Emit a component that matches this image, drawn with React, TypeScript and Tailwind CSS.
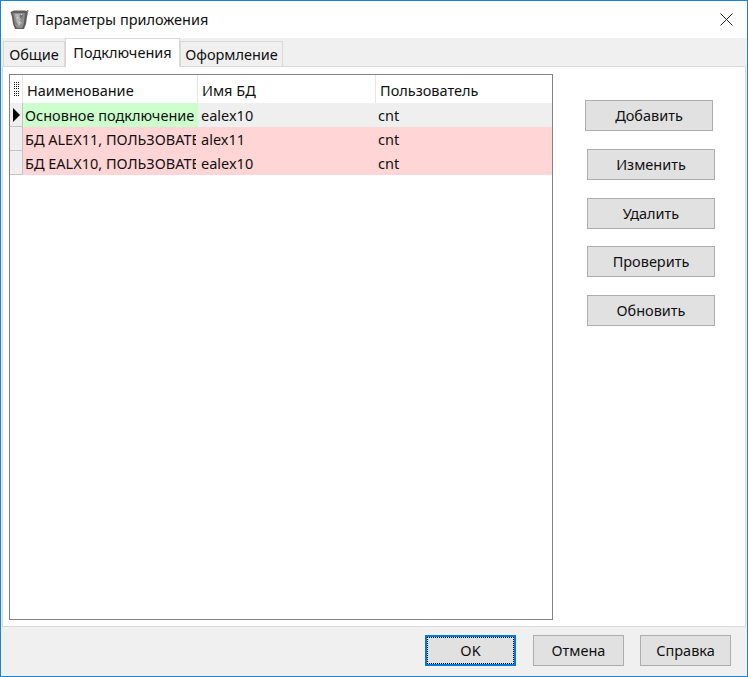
const font = "font-['Noto_Sans','Open_Sans',sans-serif]";

const rows = [
  { name: "Основное подключение", db: "ealex10", user: "cnt", nameBg: "bg-[#ccffcc]", rowBg: "bg-[#efefef]", current: true },
  { name: "БД ALEX11, ПОЛЬЗОВАТЕ", db: "alex11", user: "cnt", nameBg: "bg-[#ffd5d5]", rowBg: "bg-[#ffd5d5]", current: false },
  { name: "БД EALX10, ПОЛЬЗОВАТЕ", db: "ealex10", user: "cnt", nameBg: "bg-[#ffd5d5]", rowBg: "bg-[#ffd5d5]", current: false },
];

function AppIcon() {
  return (
    <svg width="19" height="20" viewBox="0 0 19 20">
      <path d="M0.5 2 L4 0.5 H15 L18 1.5 L17 7 L16 14 L14 19 H5 L3 14 L2 7 Z" fill="#5e5e5e" />
      <path d="M3 3 H15 L14.5 8 L13.5 15 L12 18 H7 L5 15 L4 8 Z" fill="#8f8f8f" />
      <path d="M5 4 H10 L9 7 L11 8 L10 11 L12 13 L9 16 L7 13 L6 9 Z" fill="#b4b4b4" />
      <path d="M10 5 H13 L12 9 L10 8 Z M5 11 L7 14 L6 15 Z" fill="#747474" />
      <path d="M7 7 H8 V8 H7 Z M9 12 H10 V13 H9 Z M11 4 H12 V5 H11 Z" fill="#dcdcdc" />
      <path d="M17 0 H18.5 V2 H17 Z" fill="#b58a4a" />
    </svg>
  );
}

function Btn({ label, className = "" }: { label: string; className?: string }) {
  return (
    <button className={`flex h-[31px] w-[128px] items-center justify-center border border-[#adadad] bg-[#e1e1e1] text-[14.5px] text-[#111] ${className}`}>
      {label}
    </button>
  );
}

export default function App() {
  return (
    <div className={`${font} flex h-[677px] w-[748px] flex-col overflow-hidden border border-[#1883d7] bg-[#f0f0f0] text-[14.5px] leading-none text-[#111]`}>
      {/* title bar */}
      <div className="flex h-[37px] shrink-0 items-center bg-white pl-[9px]">
        <AppIcon />
        <span className="ml-[6px]">Параметры приложения</span>
        <svg className="ml-auto mr-[14px]" width="13" height="13" viewBox="0 0 13 13" stroke="#222" strokeWidth="1" fill="none">
          <path d="M0.5 0.5 L12.5 12.5 M12.5 0.5 L0.5 12.5" />
        </svg>
      </div>

      {/* tabs */}
      <div className="flex h-[28px] shrink-0 items-end pl-[2px]">
        <div className="flex h-[25px] w-[62px] items-center justify-center border border-b-0 border-[#d9d9d9] bg-[#f0f0f0]">Общие</div>
        <div className="z-10 -mb-px flex h-[29px] w-[115px] items-center justify-center border border-b-0 border-[#d9d9d9] bg-white pb-[2px]">Подключения</div>
        <div className="flex h-[25px] w-[103px] items-center justify-center border border-b-0 border-[#d9d9d9] bg-[#f0f0f0]">Оформление</div>
      </div>

      {/* panel */}
      <div className="mx-px flex h-[561px] shrink-0 border border-[#d9d9d9] bg-white pl-[6px] pt-[7px]">
        <div className="flex h-[546px] w-[544px] shrink-0 flex-col border border-[#82828c] bg-white">
          <div className="flex h-[28px] shrink-0">
            <div className="flex w-[13px] shrink-0 items-center justify-center border-r border-[#e6e6e6]">
              <div className="flex h-[14px] w-[5px] flex-col justify-between">
                {[0, 1, 2, 3, 4, 5, 6].map((i) => (
                  <div key={i} className="h-px w-full bg-[repeating-linear-gradient(to_right,#111_0,#111_1px,transparent_1px,transparent_2px)]" />
                ))}
              </div>
            </div>
            <div className="flex w-[175px] items-center border-r border-[#e6e6e6] pl-[4px] pt-[2px]">Наименование</div>
            <div className="flex w-[178px] items-center border-r border-[#e6e6e6] pl-[4px] pt-[2px]">Имя БД</div>
            <div className="flex flex-1 items-center pl-[4px] pt-[2px]">Пользователь</div>
          </div>
          {rows.map((r) => (
            <div key={r.name} className={`flex h-[24px] shrink-0 ${r.rowBg}`}>
              <div className="flex w-[13px] shrink-0 items-center justify-center border-b border-r border-[#c4c4c4] bg-[#efefef]">
                {r.current && <div className="h-0 w-0 border-y-[7px] border-l-[7px] border-y-transparent border-l-black" />}
              </div>
              <div className={`flex w-[175px] items-center pl-[2px] pr-[2px] ${r.nameBg}`}>
                <span className="block overflow-hidden whitespace-nowrap py-[2px]">{r.name}</span>
              </div>
              <div className="flex w-[178px] items-center pl-[3px]">{r.db}</div>
              <div className="flex flex-1 items-center pl-[2px]">{r.user}</div>
            </div>
          ))}
        </div>

        <div className="ml-[32px] flex flex-col gap-[18px] pt-[26px]">
          <Btn label="Добавить" />
          <Btn label="Изменить" className="ml-[2px]" />
          <Btn label="Удалить" className="ml-[2px]" />
          <Btn label="Проверить" className="-mt-px ml-[2px]" />
          <Btn label="Обновить" className="ml-[2px]" />
        </div>
      </div>

      {/* footer */}
      <div className="flex flex-1 items-start justify-end gap-[16px] pr-[16px] pt-[8px]">
        <button className="mr-px flex h-[31px] w-[91px] items-center justify-center border-2 border-[#0078d7] bg-[#e1e1e1] outline-1 -outline-offset-3 outline-dotted outline-black">OK</button>
        <Btn label="Отмена" className="!w-[91px]" />
        <Btn label="Справка" className="!w-[91px]" />
      </div>
    </div>
  );
}
